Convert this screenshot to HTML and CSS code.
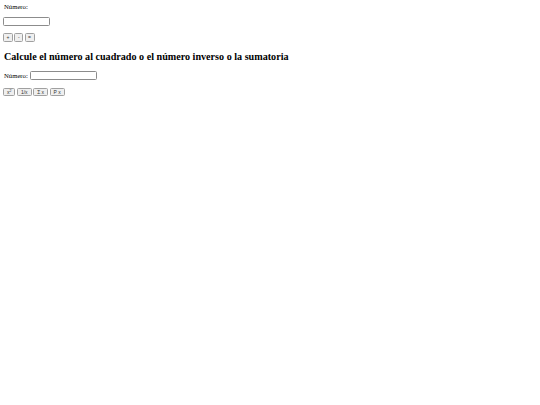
FILE: index.html
```
<!DOCTYPE html>
<html>
<head>
<meta charset="utf-8">
<link rel="stylesheet" href="styles.css">
</head>
<body class="page">
<label class="lbl-top">Número:</label>
<input class="num" type="text">
<div class="ops ops-top"><button class="btn">+</button><button class="btn">-</button><button class="btn">=</button></div>
<h3 class="title">Calcule el número al cuadrado o el número inverso o la sumatoria</h3>
<div class="row2"><label class="lbl">Número:</label><input class="num2" type="text"></div>
<div class="ops ops-bottom"><button class="btn">x<sup class="sq">2</sup></button><button class="btn">1/x</button><button class="btn">Σ x</button><button class="btn">P x</button></div>
</body>
</html>
```
FILE: styles.css
```
.page {
  margin: 0;
  padding: 0 4px;
  font-family: "Liberation Serif", "Times New Roman", serif;
  font-size: 6.7px;
  color: #000;
  background: #fff;
}
.lbl-top {
  display: block;
  height: 8px;
  line-height: 8px;
  margin-top: 3px;
}
.num, .num2 {
  box-sizing: border-box;
  height: 9px;
  padding: 0;
  border: 1px solid #8c8c8c;
  border-radius: 1.5px;
  background: #fff;
  outline: none;
}
.num {
  display: block;
  margin: 6px 0 0 -1px;
  width: 47px;
}
.ops {
  display: flex;
  gap: 1.5px;
  margin-left: -1px;
}
.ops-top { margin-top: 7px; }
.ops-bottom { margin-top: 8px; }
.btn {
  box-sizing: border-box;
  height: 8.5px;
  padding: 0 3px;
  font-family: "Liberation Sans", Arial, sans-serif;
  font-size: 5px;
  line-height: 6px;
  color: #333;
  background: #efefef;
  border: 1px solid #a0a0a0;
  border-radius: 1.5px;
}
.ops-top .btn { padding: 0 2.5px; min-width: 8px; }
.sq { font-size: 3.5px; vertical-align: 2px; line-height: 0; }
.title {
  margin: 9.5px 0 0;
  font-size: 10.15px;
  line-height: 12px;
  font-weight: bold;
}
.row2 {
  display: flex;
  align-items: center;
  gap: 2px;
  margin-top: 7.5px;
  height: 9px;
}
.num2 { width: 67px; }
```
